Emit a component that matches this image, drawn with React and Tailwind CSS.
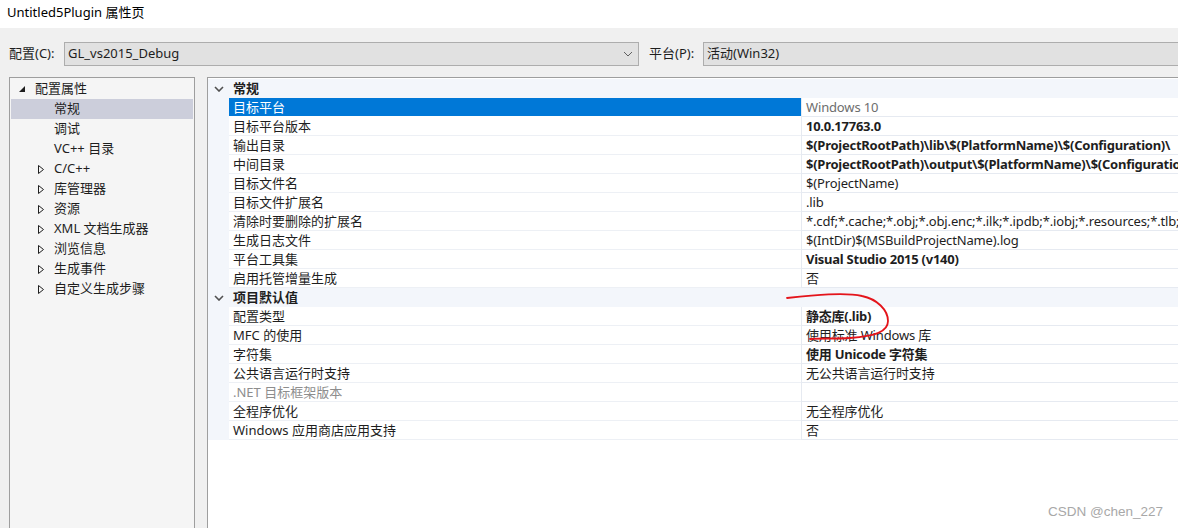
import React from "react";

const FONT = { fontFamily: '"Noto Sans", "Noto Sans CJK SC", sans-serif' };

const treeItems = [
  { label: "常规", kind: "leaf", selected: true },
  { label: "调试", kind: "leaf" },
  { label: "VC++ 目录", kind: "leaf" },
  { label: "C/C++", kind: "node" },
  { label: "库管理器", kind: "node" },
  { label: "资源", kind: "node" },
  { label: "XML 文档生成器", kind: "node" },
  { label: "浏览信息", kind: "node" },
  { label: "生成事件", kind: "node" },
  { label: "自定义生成步骤", kind: "node" },
];

const groups = [
  {
    title: "常规",
    rows: [
      { n: "目标平台", v: "Windows 10", selected: true, vGray: true },
      { n: "目标平台版本", v: "10.0.17763.0", b: true },
      { n: "输出目录", v: "$(ProjectRootPath)\\lib\\$(PlatformName)\\$(Configuration)\\", b: true },
      { n: "中间目录", v: "$(ProjectRootPath)\\output\\$(PlatformName)\\$(Configuration)\\", b: true },
      { n: "目标文件名", v: "$(ProjectName)" },
      { n: "目标文件扩展名", v: ".lib" },
      { n: "清除时要删除的扩展名", v: "*.cdf;*.cache;*.obj;*.obj.enc;*.ilk;*.ipdb;*.iobj;*.resources;*.tlb;*.tli;*.tlh;*.tmp;*.rsp" },
      { n: "生成日志文件", v: "$(IntDir)$(MSBuildProjectName).log" },
      { n: "平台工具集", v: "Visual Studio 2015 (v140)", b: true },
      { n: "启用托管增量生成", v: "否" },
    ],
  },
  {
    title: "项目默认值",
    rows: [
      { n: "配置类型", v: "静态库(.lib)", b: true },
      { n: "MFC 的使用", v: "使用标准 Windows 库" },
      { n: "字符集", v: "使用 Unicode 字符集", b: true },
      { n: "公共语言运行时支持", v: "无公共语言运行时支持" },
      { n: ".NET 目标框架版本", v: "", nGray: true },
      { n: "全程序优化", v: "无全程序优化" },
      { n: "Windows 应用商店应用支持", v: "否" },
    ],
  },
];

function ComboChevron() {
  return (
    <svg width="10" height="6" viewBox="0 0 10 6" className="shrink-0">
      <path d="M1 1 L5 5 L9 1" fill="none" stroke="#606060" strokeWidth="1" />
    </svg>
  );
}

function GroupChevron() {
  return (
    <svg width="10" height="6" viewBox="0 0 10 6">
      <path d="M1 1 L5 5 L9 1" fill="none" stroke="#505050" strokeWidth="1.6" />
    </svg>
  );
}

function FilledTri() {
  return (
    <svg width="6" height="6" viewBox="0 0 6 6">
      <polygon points="6,0 6,6 0,6" fill="#1e1e1e" />
    </svg>
  );
}

function OutlineTri() {
  return (
    <svg width="6" height="9" viewBox="0 0 6 9">
      <polygon points="0.5,0.5 5.5,4.5 0.5,8.5" fill="none" stroke="#1e1e1e" strokeWidth="1" />
    </svg>
  );
}

export default function App() {
  return (
    <div
      className="relative w-[1178px] h-[528px] overflow-hidden bg-[#f0f0f0] text-[13px] text-[#1e1e1e]"
      style={FONT}
    >
      {/* Title bar */}
      <div className="h-[28px] bg-white flex items-center pl-[7px] pb-[2px] text-[13px] text-black">
        Untitled5Plugin 属性页
      </div>

      {/* Config row */}
      <div className="flex items-center mt-[14px] h-[24px]">
        <div className="w-[64px] pl-[9px] shrink-0">配置(C):</div>
        <div className="w-[575px] h-[24px] shrink-0 border border-[#adadad] bg-[#e1e1e1] flex items-center pl-[3px] pr-[5px]">
          <span className="flex-1">GL_vs2015_Debug</span>
          <ComboChevron />
        </div>
        <div className="w-[64px] pl-[10px] shrink-0">平台(P):</div>
        <div className="w-[500px] h-[24px] shrink-0 border border-[#adadad] bg-[#e1e1e1] flex items-center pl-[3px]">
          活动(Win32)
        </div>
      </div>

      {/* Main */}
      <div className="flex mt-[11px] pl-[9px]">
        {/* Tree */}
        <div className="w-[186px] h-[480px] shrink-0 border border-[#9e9e9e] bg-[#f5f5f5] p-[1px]">
          <div className="h-[20px] flex items-center">
            <div className="w-[24px] flex justify-end pr-[10px]">
              <FilledTri />
            </div>
            <span>配置属性</span>
          </div>
          {treeItems.map((t) => (
            <div
              key={t.label}
              className={
                "h-[20px] flex items-center " + (t.selected ? "bg-[#cccedb]" : "")
              }
            >
              <div className="w-[43px] flex justify-end pr-[10px]">
                {t.kind === "node" ? <OutlineTri /> : null}
              </div>
              <span>{t.label}</span>
            </div>
          ))}
        </div>

        {/* Property grid */}
        <div className="ml-[12px] w-[1000px] h-[480px] shrink-0 border-l border-t border-[#9e9e9e] bg-white pt-[1px]">
          {groups.map((g) => (
            <div key={g.title}>
              <div className="h-[19px] flex items-center bg-[#f3f6fb]">
                <div className="w-[21px] flex justify-center pl-[1px]">
                  <GroupChevron />
                </div>
                <span className="pl-[4px] font-bold">{g.title}</span>
              </div>
              {g.rows.map((r) => (
                <div key={r.n} className="h-[19px] flex">
                  <div className="w-[21px] shrink-0 bg-[#f3f6fb]" />
                  <div
                    className={
                      "w-[572px] shrink-0 flex items-center pl-[4px] pt-[2px] whitespace-nowrap border-b " +
                      (r.selected
                        ? "bg-[#0078d7] text-white border-white"
                        : "border-[#edf0f5] " + (r.nGray ? "text-[#8d8d8d]" : ""))
                    }
                  >
                    {r.n}
                  </div>
                  <div
                    className={
                      "flex-1 min-w-0 flex items-center pl-[4px] pt-[2px] border-l border-b border-[#e6eaf1] whitespace-nowrap overflow-hidden " +
                      (r.b ? "font-bold tracking-[-0.25px] " : "tracking-[-0.15px] ") +
                      (r.vGray ? "text-[#6d6d6d]" : "")
                    }
                  >
                    {r.v}
                  </div>
                </div>
              ))}
            </div>
          ))}
        </div>
      </div>

      {/* Red hand-drawn annotation */}
      <svg
        className="absolute left-[780px] top-[288px]"
        width="120"
        height="60"
        viewBox="0 0 120 60"
      >
        <path
          d="M7 10 C 35 7, 65 4, 82 8 C 97 11, 108 22, 108 33 C 108 44, 95 48, 70 50 C 55 51, 40 50, 30 51"
          fill="none"
          stroke="#e4141b"
          strokeWidth="1.8"
          strokeLinecap="round"
        />
      </svg>

      {/* Watermark */}
      <div
        className="absolute right-[15px] bottom-[6px] text-[13.5px] text-[#a8a8a8]"
        style={{ fontFamily: '"Liberation Sans", Arial, sans-serif' }}
      >
        CSDN @chen_227
      </div>
    </div>
  );
}
